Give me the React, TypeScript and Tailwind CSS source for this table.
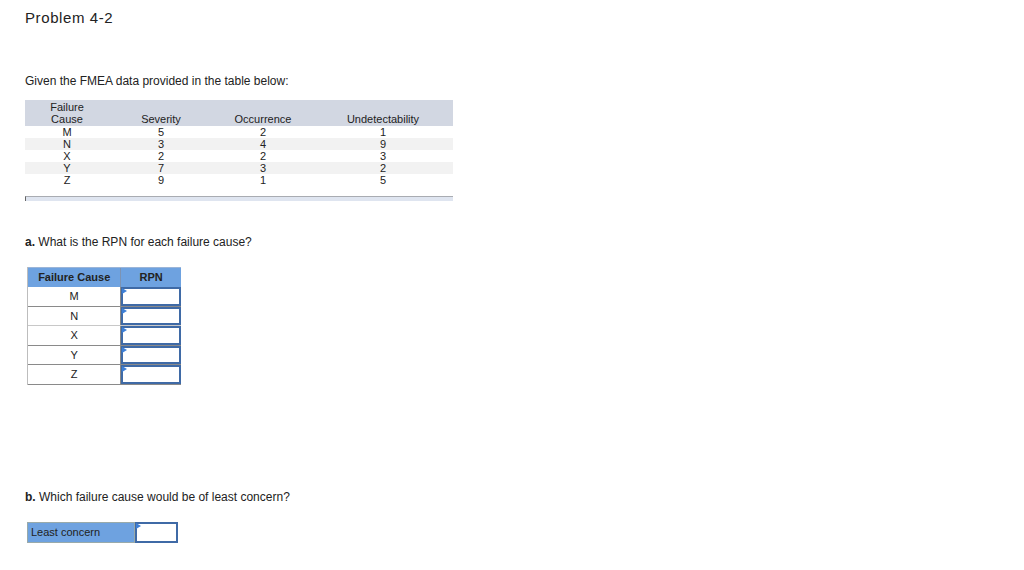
import React from 'react';

const fmea = [
  { cause: 'M', sev: 5, occ: 2, und: 1 },
  { cause: 'N', sev: 3, occ: 4, und: 9 },
  { cause: 'X', sev: 2, occ: 2, und: 3 },
  { cause: 'Y', sev: 7, occ: 3, und: 2 },
  { cause: 'Z', sev: 9, occ: 1, und: 5 },
];

const AnswerBox = ({ className = '' }: { className?: string }) => (
  <div className={`relative border-2 border-[#3f6aa6] bg-white ${className}`}>
    <span className="absolute -left-[1px] -top-[1px] w-0 h-0 border-t-[3px] border-b-[3px] border-l-[5px] border-t-transparent border-b-transparent border-l-[#3d7fd6]" />
  </div>
);

const App = () => {
  return (
    <div className="w-[1024px] h-[570px] bg-white text-[#333] font-['Liberation_Sans',Arial,sans-serif] overflow-hidden">
      <div className="pl-[25px] pt-[9px]">
        <h1 className="text-[15px] leading-[18px] tracking-[0.6px] text-[#222]">Problem 4-2</h1>

        <p className="mt-[47px] text-[12px] leading-[14px] text-[#222]">Given the FMEA data provided in the table below:</p>

        {/* FMEA data */}
        <div className="mt-[12px] w-[428px] text-[11px] leading-[12px] text-[#222]">
          <div className="flex bg-[#d2d7e2] pt-[1px] pb-[1px]">
            <div className="w-[84px] text-center">Failure<br />Cause</div>
            <div className="w-[104px] text-center self-end">Severity</div>
            <div className="w-[100px] text-center self-end">Occurrence</div>
            <div className="w-[140px] text-center self-end">Undetectability</div>
          </div>
          {fmea.map((r, i) => (
            <div key={r.cause} className={`flex h-[12px] ${i % 2 === 1 ? 'bg-[#f2f2f2]' : 'bg-white'}`}>
              <div className="w-[84px] text-center">{r.cause}</div>
              <div className="w-[104px] text-center">{r.sev}</div>
              <div className="w-[100px] text-center">{r.occ}</div>
              <div className="w-[140px] text-center">{r.und}</div>
            </div>
          ))}
          <div className="mt-[10px] h-[5px] border-t border-[#a9acb2] border-l border-l-[#666] bg-[#dfe5f0]" />
        </div>

        <p className="mt-[34px] text-[12px] leading-[14px] text-[#222]">
          <span className="font-bold">a.</span> What is the RPN for each failure cause?
        </p>

        {/* RPN table */}
        <div className="mt-[18px] ml-[2px] w-[154px] border-l border-[#bdbdbd] text-[11px] text-[#222]">
          <div className="flex h-[20px] bg-[#6ea2e0] border-t border-[#9bb5d8]">
            <div className="w-[94px] flex items-center justify-center font-bold border-r border-[#7c93b3]">Failure Cause</div>
            <div className="w-[60px] flex items-center justify-center font-bold">RPN</div>
          </div>
          {fmea.map((r, i) => (
            <div key={r.cause} className={`flex h-[19.6px] border-b ${i === 1 ? 'border-[#c8c8c8]' : 'border-[#8a8a8a]'}`}>
              <div className="w-[94px] flex items-center justify-center border-r border-[#8a8a8a]">{r.cause}</div>
              <AnswerBox className="w-[60px]" />
            </div>
          ))}
        </div>

        <p className="mt-[105px] text-[12px] leading-[14px] text-[#222]">
          <span className="font-bold">b.</span> Which failure cause would be of least concern?
        </p>

        <div className="mt-[18px] ml-[2px] flex h-[21px] w-[151px] text-[11px] text-[#222]">
          <div className="w-[108px] bg-[#6ea2e0] border border-[#9aa] flex items-center pl-[3px]">Least concern</div>
          <AnswerBox className="w-[43px]" />
        </div>
      </div>
    </div>
  );
};

export default App;
